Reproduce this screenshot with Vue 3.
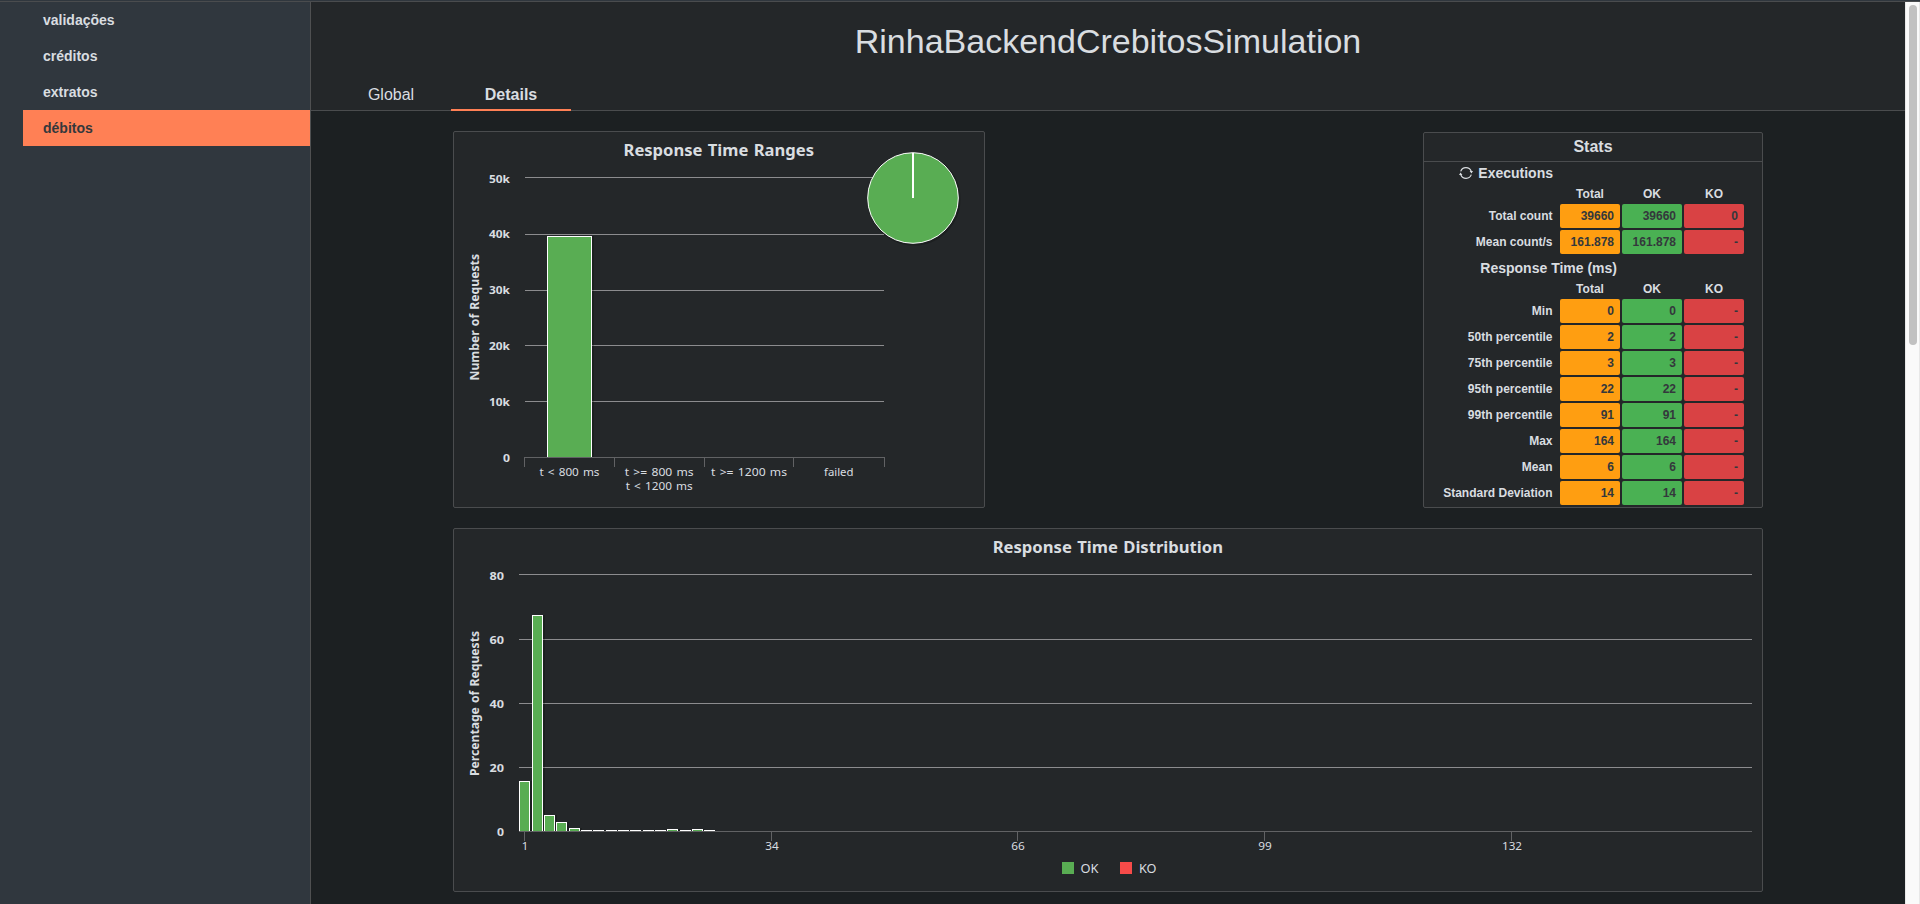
<script setup>
const menu = [
  { name: 'validações', active: false },
  { name: 'créditos', active: false },
  { name: 'extratos', active: false },
  { name: 'débitos', active: true },
]

const groups = [
  {
    title: 'Executions',
    icon: true,
    rows: [
      ['Total count', '39660', '39660', '0'],
      ['Mean count/s', '161.878', '161.878', '-'],
    ],
  },
  {
    title: 'Response Time (ms)',
    icon: false,
    rows: [
      ['Min', '0', '0', '-'],
      ['50th percentile', '2', '2', '-'],
      ['75th percentile', '3', '3', '-'],
      ['95th percentile', '22', '22', '-'],
      ['99th percentile', '91', '91', '-'],
      ['Max', '164', '164', '-'],
      ['Mean', '6', '6', '-'],
      ['Standard Deviation', '14', '14', '-'],
    ],
  },
]

const rangeGrid = [
  { label: '50k', y: 45, base: 51, w: 21 },
  { label: '40k', y: 102, base: 106, w: 21 },
  { label: '30k', y: 158, base: 162, w: 21 },
  { label: '20k', y: 213, base: 218, w: 21 },
  { label: '10k', y: 269, base: 274, w: 21 },
]
const rangeTicks = [70, 160, 250, 339, 430]
const rangeLabels = [
  { text: 't < 800 ms', x: 85.5, y: 344, w: 60 },
  { text: 't >= 800 ms', x: 170.7, y: 344, w: 69 },
  { text: 't < 1200 ms', x: 171.7, y: 358, w: 67 },
  { text: 't >= 1200 ms', x: 257, y: 344, w: 76 },
  { text: 'failed', x: 370, y: 344, w: 29.5 },
]

const distGrid = [
  { label: '80', y: 45, base: 51 },
  { label: '60', y: 110, base: 115 },
  { label: '40', y: 174, base: 179 },
  { label: '20', y: 238, base: 243 },
]
const distTicks = [
  { label: '1', x: 70, w: 6.5 },
  { label: '34', x: 317, w: 13.5 },
  { label: '66', x: 563, w: 13.5 },
  { label: '99', x: 810, w: 13.5 },
  { label: '132', x: 1057, w: 20 },
]
// [left, top] of every column of the distribution
const columns = [
  [65, 252], [78, 86], [90, 286], [102, 293], [115, 299], [127, 301],
  [139, 301], [152, 301], [164, 301], [176, 301], [189, 301], [201, 301],
  [213, 300], [226, 301], [238, 300], [250, 301],
]
</script>

<template>
  <div class="page">
    <div class="topbar"></div>
    <div class="body">
      <nav class="sidebar">
        <a v-for="m in menu" :key="m.name" class="item" :class="{ active: m.active }">{{ m.name }}</a>
      </nav>
      <main class="main">
        <header class="header">
          <h1 class="title">RinhaBackendCrebitosSimulation</h1>
          <div class="tabs">
            <a class="tab">Global</a>
            <a class="tab current">Details</a>
          </div>
        </header>
        <div class="content">
          <div class="row">
            <section class="panel ranges">
              <svg class="chart" width="530" height="375" viewBox="0 0 530 375">
                <text class="ctitle" x="169.500" y="24" textLength="190.500" lengthAdjust="spacingAndGlyphs">Response Time Ranges</text>
                <g v-for="g in rangeGrid" :key="g.label">
                  <rect class="grid" x="71" :y="g.y" width="359" height="1" />
                  <text class="ylab" x="35" :y="g.base" :textLength="g.w" lengthAdjust="spacingAndGlyphs">{{ g.label }}</text>
                </g>
                <text class="ylab" x="49" y="330" textLength="7" lengthAdjust="spacingAndGlyphs">0</text>
                <text class="ytitle" transform="translate(25 248.500) rotate(-90)" textLength="126.500" lengthAdjust="spacingAndGlyphs">Number of Requests</text>
                <rect class="shadow" x="94" y="105" width="45" height="220" />
                <rect class="edge" x="93" y="104" width="45" height="221" />
                <rect class="ok" x="94" y="105" width="43" height="220" />
                <rect class="axis" x="70" y="325" width="361" height="1" />
                <rect v-for="t in rangeTicks" :key="t" class="axis" :x="t" y="325" width="1" height="10" />
                <text v-for="l in rangeLabels" :key="l.text" class="xlab" :x="l.x" :y="l.y" :textLength="l.w" lengthAdjust="spacingAndGlyphs">{{ l.text }}</text>
                <circle class="shadow" cx="460" cy="67" r="45.500" />
                <circle class="pie" cx="459" cy="66" r="45.300" />
                <rect class="edge" x="458" y="21" width="2" height="45" />
              </svg>
            </section>
            <section class="panel stats">
              <h2 class="stats-title">Stats</h2>
              <div v-for="g in groups" :key="g.title" class="group">
                <div class="group-title" :class="{ wide: !g.icon }">
                  <svg v-if="g.icon" class="icon" width="14" height="14" viewBox="0 0 14 14">
                    <path d="M1.700 5.400A5.600 5.600 0 0 1 12.200 5.200M12.300 8.600A5.600 5.600 0 0 1 1.800 8.800" fill="none" stroke="#d9dde0" stroke-width="1.200" />
                    <path d="M10.600 5.100H14L12.500 7.400ZM0 8.900H3.400L1.500 6.600Z" fill="#d9dde0" />
                  </svg>
                  <span>{{ g.title }}</span>
                </div>
                <div class="line heads">
                  <span></span><span>Total</span><span>OK</span><span>KO</span>
                </div>
                <div v-for="r in g.rows" :key="r[0]" class="line">
                  <span class="label">{{ r[0] }}</span>
                  <span class="cell total">{{ r[1] }}</span>
                  <span class="cell good">{{ r[2] }}</span>
                  <span class="cell bad">{{ r[3] }}</span>
                </div>
              </div>
            </section>
          </div>
          <section class="panel">
            <svg class="chart" width="1308" height="362" viewBox="0 0 1308 362">
              <text class="ctitle" x="538.700" y="24" textLength="230.300" lengthAdjust="spacingAndGlyphs">Response Time Distribution</text>
              <g v-for="g in distGrid" :key="g.label">
                <rect class="grid" x="65" :y="g.y" width="1233" height="1" />
                <text class="ylab" x="35.500" :y="g.base" textLength="14.500" lengthAdjust="spacingAndGlyphs">{{ g.label }}</text>
              </g>
              <text class="ylab" x="43" y="307" textLength="7" lengthAdjust="spacingAndGlyphs">0</text>
              <text class="ytitle" transform="translate(25 247) rotate(-90)" textLength="145" lengthAdjust="spacingAndGlyphs">Percentage of Requests</text>
              <g v-for="c in columns" :key="c[0]">
                <rect class="shadow" :x="c[0] + 1" :y="c[1] + 1" width="11" :height="301 - c[1]" />
                <rect class="edge" :x="c[0]" :y="c[1]" width="11" :height="302 - c[1]" />
                <rect class="ok" :x="c[0] + 1" :y="c[1] + 1" width="9" :height="301 - c[1]" />
              </g>
              <rect class="axis" x="65" y="302" width="1233" height="1" />
              <g v-for="t in distTicks" :key="t.label">
                <rect class="axis" :x="t.x" y="303" width="1" height="9" />
                <text class="xlab" :x="t.x + 1 - t.w / 2" y="321" :textLength="t.w" lengthAdjust="spacingAndGlyphs">{{ t.label }}</text>
              </g>
              <rect class="ok" x="608" y="333" width="12" height="12" />
              <text class="legend" x="626.500" y="344" textLength="18" lengthAdjust="spacingAndGlyphs">OK</text>
              <rect class="ko" x="666" y="333" width="12" height="12" />
              <text class="legend" x="685" y="344" textLength="17.500" lengthAdjust="spacingAndGlyphs">KO</text>
            </svg>
          </section>
        </div>
      </main>
      <div class="scrollbar"><div class="thumb"></div></div>
    </div>
  </div>
</template>

<style>
body { margin: 0; background: #1c2022; overflow: hidden; }
</style>

<style scoped>
.page {
  width: 1920px;
  height: 904px;
  display: flex;
  flex-direction: column;
  overflow: hidden;
  font-family: "Liberation Sans", Arial, sans-serif;
  color: #d9dde0;
}
.topbar { height: 1px; background: #30373e; border-bottom: 1px solid #4a4c4e; flex: none; }
.body { flex: 1; display: flex; min-height: 0; }
.sidebar {
  box-sizing: border-box;
  width: 311px;
  flex: none;
  padding-left: 23px;
  background: #30373e;
  border-right: 1px solid #4f5051;
}
.item {
  display: block;
  height: 36px;
  line-height: 36px;
  padding-left: 20px;
  font-size: 14px;
  font-weight: bold;
}
.item.active { background: #ff8055; color: #34383c; }
.main { flex: 1; min-width: 0; background: #1c2022; }
.header {
  box-sizing: border-box;
  height: 109px;
  display: flex;
  flex-direction: column;
  background: #242729;
  border-bottom: 1px solid #4a4c4e;
}
.title {
  margin: 0;
  height: 76px;
  line-height: 78px;
  text-align: center;
  font-size: 34px;
  font-weight: normal;
}
.tabs { display: flex; padding-left: 20px; height: 33px; }
.tab {
  box-sizing: border-box;
  width: 120px;
  height: 33px;
  line-height: 34px;
  text-align: center;
  font-size: 16px;
}
.tab.current { font-weight: bold; border-bottom: 2px solid #ff8055; }
.content { padding: 20px 142px 0; display: flex; flex-direction: column; gap: 20px; }
.row { display: flex; justify-content: space-between; align-items: flex-end; }
.panel { border: 1px solid #4a4c4e; border-radius: 2px; background: #242729; }
.ranges { width: 530px; height: 375px; }
.stats { width: 338px; height: 374px; }
.chart { display: block; font-family: "Noto Sans", "Open Sans", sans-serif; fill: #d9dde0; }
.ctitle { font-size: 16px; font-weight: bold; word-spacing: 1px; }
.ylab { font-size: 11px; font-weight: bold; }
.ytitle { font-size: 12px; font-weight: bold; word-spacing: 1px; }
.xlab { font-size: 11px; word-spacing: 1px; }
.legend { font-size: 12px; }
.grid { fill: #8c8c8e; }
.axis { fill: #616264; }
.edge { fill: #ffffff; }
.ok { fill: #59ad53; }
.ko { fill: #f64b49; }
.pie { fill: #59ad53; stroke: #ffffff; stroke-width: 1px; }
.shadow { fill: none; stroke: #000000; stroke-opacity: 0.2; stroke-width: 2px; }
.stats-title {
  margin: 0;
  height: 28px;
  line-height: 27px;
  text-align: center;
  font-size: 16px;
  border-bottom: 1px solid #4a4c4e;
}
.group-title {
  box-sizing: border-box;
  width: 129px;
  height: 23px;
  line-height: 23px;
  display: flex;
  justify-content: flex-end;
  align-items: center;
  gap: 5px;
  font-size: 14px;
  font-weight: bold;
}
.group-title.wide { width: 193px; height: 24px; padding-top: 1px; }
.icon { margin-top: -1px; }
.line {
  display: grid;
  grid-template-columns: 134px 60px 60px 60px;
  column-gap: 2px;
  height: 26px;
  font-size: 12px;
  font-weight: bold;
}
.heads { height: 19px; line-height: 19px; text-align: center; }
.label { text-align: right; padding-right: 5.5px; line-height: 24px; }
.cell {
  height: 24px;
  line-height: 24px;
  padding-right: 6px;
  text-align: right;
  border-radius: 2px;
  color: #34383c;
}
.total { background: #ff9e11; }
.good { background: #4ab153; }
.bad { background: #d94244; }
.scrollbar {
  box-sizing: border-box;
  width: 15px;
  flex: none;
  background: #fafafa;
  border-left: 1px solid #e8e8e8;
  border-right: 1px solid #e8e8e8;
  padding: 3px 2px 0 3px;
}
.thumb { height: 340px; border-radius: 4px; background: #c1c1c1; }
</style>
